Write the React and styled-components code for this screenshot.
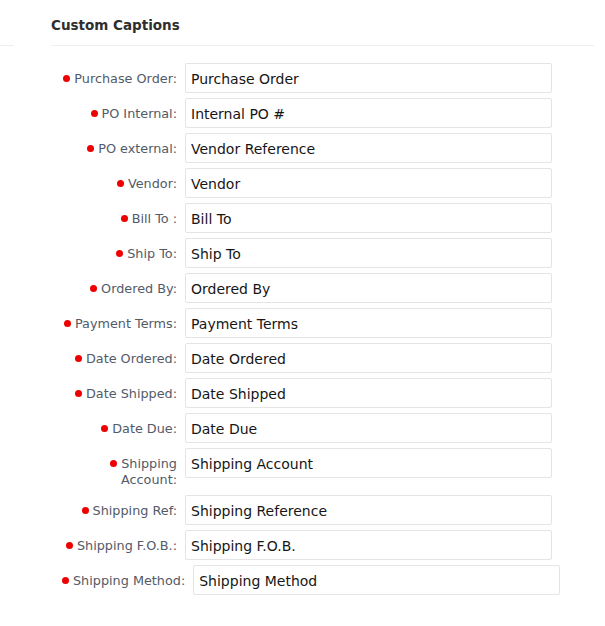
import React from 'react';
import styled, { createGlobalStyle } from 'styled-components';

const captions = [
    { label: 'Purchase Order:', value: 'Purchase Order' },
    { label: 'PO Internal:', value: 'Internal PO #' },
    { label: 'PO external:', value: 'Vendor Reference' },
    { label: 'Vendor:', value: 'Vendor' },
    { label: 'Bill To :', value: 'Bill To' },
    { label: 'Ship To:', value: 'Ship To' },
    { label: 'Ordered By:', value: 'Ordered By' },
    { label: 'Payment Terms:', value: 'Payment Terms' },
    { label: 'Date Ordered:', value: 'Date Ordered' },
    { label: 'Date Shipped:', value: 'Date Shipped' },
    { label: 'Date Due:', value: 'Date Due' },
    { label: 'Shipping Account:', value: 'Shipping Account' },
    { label: 'Shipping Ref:', value: 'Shipping Reference' },
    { label: 'Shipping F.O.B.:', value: 'Shipping F.O.B.' },
    { label: 'Shipping Method:', value: 'Shipping Method', nowrap: true },
];

export default function App() {
    return (
        <>
            <GlobalStyle />
            <Page>
                <HeaderRow>
                    <Stub />
                    <Header>
                        <Title>Custom Captions</Title>
                    </Header>
                </HeaderRow>
                <Form>
                    {captions.map((c) => (
                        <Row key={c.label}>
                            <Label $nowrap={c.nowrap}>
                                <Dot />
                                {c.label}
                            </Label>
                            <Input defaultValue={c.value} />
                        </Row>
                    ))}
                </Form>
            </Page>
        </>
    );
}

const GlobalStyle = createGlobalStyle`
    body {
        margin: 0;
        background: #fff;
        font-family: "DejaVu Sans", "Liberation Sans", sans-serif;
    }
`;

const Page = styled.div`
    width: 605px;
    min-height: 626px;
`;

const HeaderRow = styled.div`
    display: flex;
    align-items: flex-end;
    gap: 37px;
    padding-right: 11px;
`;

const Stub = styled.div`
    width: 14px;
    border-bottom: 1px solid #efefef;
`;

const Header = styled.div`
    flex: 1;
    padding: 17px 0 12px;
    border-bottom: 1px solid #efefef;
`;

const Title = styled.h2`
    margin: 0;
    font-size: 13.5px;
    line-height: 16px;
    font-weight: 700;
    color: #2e2e2e;
`;

const Form = styled.div`
    display: flex;
    flex-direction: column;
    gap: 5px;
    padding: 17px 0 0 62px;
`;

const Row = styled.div`
    display: flex;
    align-items: flex-start;
    gap: 8px;
`;

/* right-aligned caption; long ones wrap unless $nowrap lets the column grow */
const Label = styled.label`
    flex: none;
    box-sizing: border-box;
    width: ${(p) => (p.$nowrap ? 'auto' : '115px')};
    min-width: 115px;
    white-space: ${(p) => (p.$nowrap ? 'nowrap' : 'normal')};
    padding: 8px 0 2px;
    text-align: right;
    font-size: 12.8px;
    line-height: 16px;
    color: #535a68;
`;

const Dot = styled.span`
    display: inline-block;
    width: 7px;
    height: 7px;
    margin-right: 4px;
    border-radius: 50%;
    background: #ee0000;
    vertical-align: 1px;
`;

const Input = styled.input`
    box-sizing: border-box;
    width: 367px;
    height: 30px;
    padding: 1px 5px 0;
    border: 1px solid #e4e4e4;
    border-radius: 2px;
    font-family: inherit;
    font-size: 14px;
    color: #161616;
    background: #fff;
    outline: none;
`;
